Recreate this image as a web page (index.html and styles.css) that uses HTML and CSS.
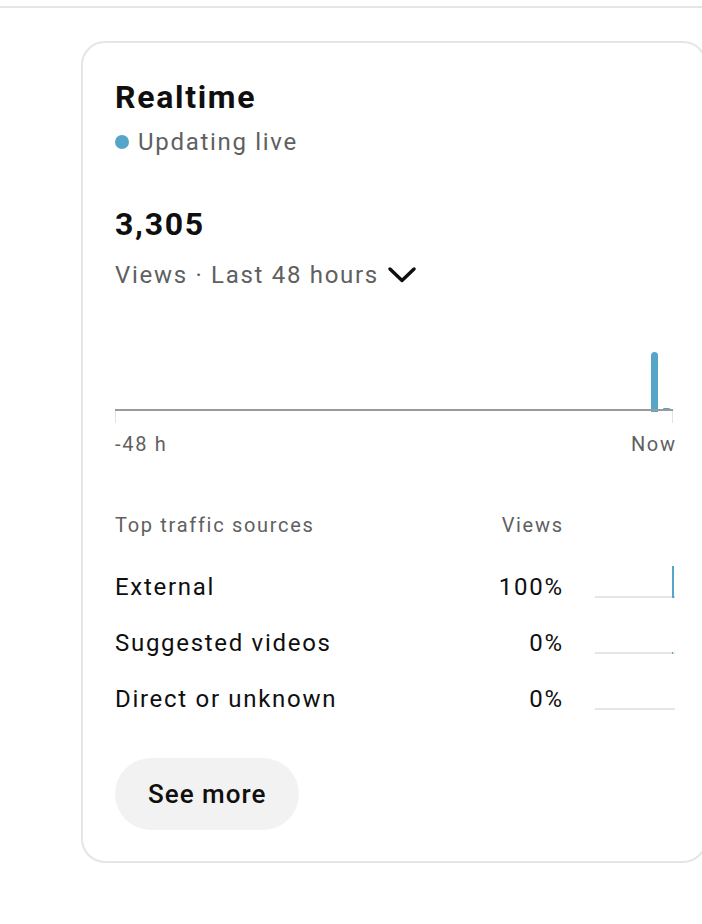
FILE: index.html
```html
<!DOCTYPE html>
<html lang="en">
<head>
    <meta charset="UTF-8">
    <meta name="viewport" content="width=device-width, initial-scale=1.0">
    <title>Realtime</title>

    <link rel="stylesheet" href="styles.css">
</head>
<body>

<div class="top-bar"></div>

<div class="card">
    <div class="card-title">Realtime</div>
    <div class="live">
        <span class="live-dot"></span>
        <span>Updating live</span>
    </div>

    <div class="total">3,305</div>
    <div class="period">
        <span>Views · Last 48 hours</span>
        <svg class="chevron" width="28" height="16" viewBox="0 0 28 16">
            <polyline points="2,2 14,13.5 26,2" fill="none" stroke="#0f0f0f" stroke-width="3.4" stroke-linecap="round" stroke-linejoin="round"/>
        </svg>
    </div>

    <svg class="chart" width="558" height="139" viewBox="0 0 558 139">
        <rect x="536" y="61" width="7" height="60" rx="3.5" fill="#55a5c9"/>
        <rect x="536" y="100" width="7" height="21" fill="#55a5c9"/>
        <rect x="548" y="117" width="7" height="3" rx="1" fill="#55a5c9"/>
        <rect x="0" y="118" width="558" height="2" fill="#9a9a9a"/>
        <rect x="0" y="120" width="1" height="12" fill="#e2e2e2"/>
        <rect x="557" y="120" width="1" height="12" fill="#e2e2e2"/>
    </svg>
    <div class="chart-labels">
        <span>-48 h</span>
        <span class="label-end">Now</span>
    </div>

    <div class="sources">
        <div class="sources-head">
            <span class="col-name">Top traffic sources</span>
            <span class="col-value">Views</span>
            <span class="col-spark"></span>
        </div>
        <div class="source-row">
            <span class="col-name">External</span>
            <span class="col-value">100%</span>
            <svg class="col-spark" width="80" height="32" viewBox="0 0 80 32">
                <rect x="0" y="30" width="80" height="2" fill="#e5e5e5"/>
                <rect x="77" y="0" width="2" height="32" fill="#55a5c9"/>
                <rect x="79" y="30" width="1" height="2" fill="#b8d9e8"/>
            </svg>
        </div>
        <div class="source-row">
            <span class="col-name">Suggested videos</span>
            <span class="col-value">0%</span>
            <svg class="col-spark" width="80" height="32" viewBox="0 0 80 32">
                <rect x="0" y="30" width="80" height="2" fill="#e5e5e5"/>
                <rect x="77" y="30" width="1" height="2" fill="#55a5c9"/>
            </svg>
        </div>
        <div class="source-row">
            <span class="col-name">Direct or unknown</span>
            <span class="col-value">0%</span>
            <svg class="col-spark" width="80" height="32" viewBox="0 0 80 32">
                <rect x="0" y="30" width="80" height="2" fill="#e5e5e5"/>
            </svg>
        </div>
    </div>

    <button class="see-more">See more</button>
</div>

</body>
</html>
```

FILE: styles.css
```css
body {
    margin: 0;
    background: white;
    font-family: Roboto, "Liberation Sans", sans-serif;
    color: #0f0f0f;
    letter-spacing: 1.7px;
    overflow: hidden;
}

.top-bar {
    height: 6px;
    border-bottom: 2px solid #e5e5e5;
}

.card {
    width: 560px;
    margin-top: 33px;
    margin-left: 81px;
    padding: 34px 30px 31px 32px;
    border: 2px solid #e5e5e5;
    border-radius: 24px;
}

.card-title {
    font-size: 32px;
    line-height: 40px;
    font-weight: 700;
}

.live {
    display: flex;
    align-items: center;
    gap: 9px;
    margin-top: 9px;
    font-size: 24px;
    line-height: 32px;
    color: #606060;
}

.live-dot {
    width: 14px;
    height: 14px;
    border-radius: 50%;
    background: #55a5c9;
}

.total {
    margin-top: 46px;
    font-size: 32px;
    line-height: 40px;
    font-weight: 700;
}

.period {
    display: flex;
    align-items: center;
    gap: 9px;
    margin-top: 15px;
    font-size: 24px;
    line-height: 32px;
    color: #606060;
}

.chart {
    display: block;
}

.chart-labels {
    display: flex;
    justify-content: space-between;
    font-size: 20px;
    line-height: 28px;
    color: #606060;
}

.label-end {
    margin-right: -1.7px;
}

.sources {
    margin-top: 53px;
}

.sources-head,
.source-row {
    display: flex;
    align-items: flex-start;
}

.sources-head {
    font-size: 20px;
    line-height: 28px;
    color: #606060;
}

.source-row {
    margin-top: 24px;
    font-size: 24px;
    line-height: 32px;
}

.sources-head + .source-row {
    margin-top: 32px;
}

.col-name {
    flex: 1;
}

.col-value {
    text-align: right;
    margin-right: -1.7px;
}

.col-spark {
    display: block;
    width: 80px;
    margin-left: 33px;
    flex-shrink: 0;
}

.source-row .col-spark {
    margin-top: -5px;
}

.see-more {
    display: block;
    margin-top: 43px;
    height: 72px;
    padding: 0 33px;
    border: none;
    border-radius: 36px;
    background: #f2f2f2;
    font-family: Roboto, "Liberation Sans", sans-serif;
    font-size: 26px;
    font-weight: 500;
    letter-spacing: 1px;
    color: #0f0f0f;
}
```
